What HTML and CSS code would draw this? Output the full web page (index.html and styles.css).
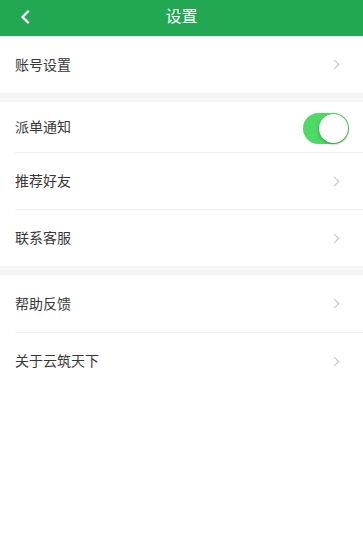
FILE: index.html
```html
<!DOCTYPE html>
<html lang="zh-CN">
<head>
  <meta charset="UTF-8" />
  <meta name="viewport" content="width=device-width, initial-scale=1" />
  <title>设置</title>
  <link rel="stylesheet" href="styles.css">
</head>
<body>
  <header class="nav-bar">
    <span class="back">
      <svg width="10" height="14" viewBox="0 0 10 14"><path d="M8 1.5 L2.5 7 L8 12.5" fill="none" stroke="#fff" stroke-width="2.4" stroke-linecap="round" stroke-linejoin="round"/></svg>
    </span>
    <h1>设置</h1>
  </header>

  <div class="group">
    <div class="cell">
      <span class="label">账号设置</span>
      <span class="arrow"><svg width="7" height="11" viewBox="0 0 7 11"><path d="M1 0.8 L5.8 5.5 L1 10.2" fill="none" stroke="#c8c8cc" stroke-width="1.1"/></svg></span>
    </div>
  </div>

  <div class="group">
    <div class="cell cell-short">
      <span class="label">派单通知</span>
      <span class="switch on"><span class="knob"></span></span>
    </div>
    <div class="cell">
      <span class="label">推荐好友</span>
      <span class="arrow"><svg width="7" height="11" viewBox="0 0 7 11"><path d="M1 0.8 L5.8 5.5 L1 10.2" fill="none" stroke="#c8c8cc" stroke-width="1.1"/></svg></span>
    </div>
    <div class="cell">
      <span class="label">联系客服</span>
      <span class="arrow"><svg width="7" height="11" viewBox="0 0 7 11"><path d="M1 0.8 L5.8 5.5 L1 10.2" fill="none" stroke="#c8c8cc" stroke-width="1.1"/></svg></span>
    </div>
  </div>

  <div class="group">
    <div class="cell">
      <span class="label">帮助反馈</span>
      <span class="arrow"><svg width="7" height="11" viewBox="0 0 7 11"><path d="M1 0.8 L5.8 5.5 L1 10.2" fill="none" stroke="#c8c8cc" stroke-width="1.1"/></svg></span>
    </div>
    <div class="cell">
      <span class="label">关于云筑天下</span>
      <span class="arrow"><svg width="7" height="11" viewBox="0 0 7 11"><path d="M1 0.8 L5.8 5.5 L1 10.2" fill="none" stroke="#c8c8cc" stroke-width="1.1"/></svg></span>
    </div>
  </div>
</body>
</html>
```

FILE: styles.css
```css
body {
  margin: 0;
  font-family: "Noto Sans CJK SC", "Noto Sans", sans-serif;
  background: #fff;
  color: #333;
}
.nav-bar {
  height: 36px;
  background: #22a852;
  display: flex;
  align-items: center;
  justify-content: center;
  position: relative;
}
.nav-bar h1 {
  margin: 0;
  font-size: 16px;
  font-weight: normal;
  color: #fff;
  line-height: 1;
  padding-bottom: 6px;
}
.back {
  position: absolute;
  left: 20px;
  top: 10px;
  display: flex;
}
.group {
  background: #fff;
  border-bottom: 9px solid #f5f5f5;
}
.group:last-child {
  border-bottom: none;
}
.cell {
  height: 56px;
  margin-left: 15px;
  padding-right: 23px;
  display: flex;
  align-items: center;
  justify-content: space-between;
  border-top: 1px solid #f0f0f0;
}
.cell:first-child {
  border-top: none;
  height: 57px;
}
.cell-short {
  height: 50px;
}
.cell.cell-short:first-child {
  height: 50px;
}
.label {
  font-size: 14px;
  color: #383838;
  padding-bottom: 2px;
}
.arrow {
  display: flex;
}
.switch {
  width: 46px;
  height: 31px;
  border-radius: 16px;
  background: #4cd964;
  display: flex;
  align-items: center;
  justify-content: flex-end;
  margin-right: -9px;
  margin-top: 3px;
}
.knob {
  width: 29px;
  height: 29px;
  border-radius: 50%;
  background: #fff;
  box-shadow: 0 1px 3px rgba(0,0,0,0.35);
  margin-right: 1px;
}
```
